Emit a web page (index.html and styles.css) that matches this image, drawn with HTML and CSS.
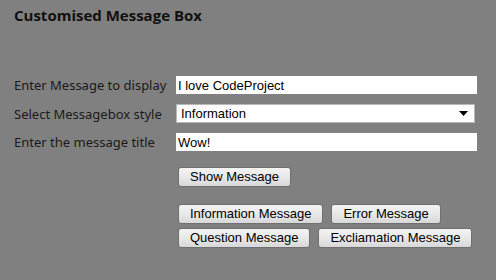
FILE: index.html
```html
<!doctype html>
<html>
<head>
    <meta charset="utf-8">
    <title>Customised Message Box</title>
    <link rel="stylesheet" href="styles.css">
</head>
<body>
<div class="page">
    <h2 class="title">Customised Message Box</h2>
    <form class="form" action="" method="get">
        <label class="lbl" for="msg">Enter Message to display</label>
        <input class="txt" id="msg" type="text" value="I love CodeProject">

        <label class="lbl" for="style">Select Messagebox style</label>
        <div class="sel">
            <span>Information</span>
            <svg width="9" height="5" viewBox="0 0 9 5"><path d="M0 0H9L4.5 5Z" fill="#000"/></svg>
        </div>

        <label class="lbl" for="title">Enter the message title</label>
        <input class="txt" id="title" type="text" value="Wow!">

        <div></div>
        <div class="show"><button class="btn" type="button">Show Message</button></div>

        <div></div>
        <div class="btns">
            <div class="line">
                <button class="btn" type="button">Information Message</button>
                <button class="btn" type="button">Error Message</button>
            </div>
            <div class="line">
                <button class="btn" type="button">Question Message</button>
                <button class="btn" type="button">Excliamation Message</button>
            </div>
        </div>
    </form>
</div>
</body>
</html>
```

FILE: styles.css
```css
html, body {
    margin: 0;
    background: #808080;
}

.page {
    padding: 5px 14px;
}

.title {
    margin: 0;
    font-family: "Open Sans", sans-serif;
    font-weight: bold;
    font-size: 15px;
    color: #111;
}

.form {
    margin-top: 51px;
    display: grid;
    grid-template-columns: 162px 1fr;
    row-gap: 10px;
    align-items: center;
}

.lbl {
    font-family: "Noto Sans", sans-serif;
    font-size: 13px;
    color: #1a1a1a;
}

.txt {
    width: 301px;
    height: 18px;
    box-sizing: border-box;
    margin: 0;
    padding: 0 2px;
    border: none;
    background: #fff;
    font-family: "Liberation Sans", Arial, sans-serif;
    font-size: 13px;
    color: #000;
}

.sel {
    width: 299px;
    height: 19px;
    box-sizing: border-box;
    border: 1px solid #b8b8b8;
    background: #fff;
    display: flex;
    align-items: center;
    justify-content: space-between;
    padding: 0 6px 0 4px;
    font-family: "Liberation Sans", Arial, sans-serif;
    font-size: 13px;
}

.show {
    padding: 6px 0 7px 2px;
}

.btns {
    display: flex;
    flex-direction: column;
    gap: 4px;
    padding-left: 2px;
}

.line {
    display: flex;
    gap: 8px;
}

.btn {
    height: 20px;
    box-sizing: border-box;
    margin: 0;
    padding: 0 11px 1px;
    border: 1px solid #707070;
    border-radius: 3px;
    background: linear-gradient(#f3f3f3, #e8e8e8 50%, #d8d8d8);
    font-family: "Liberation Sans", Arial, sans-serif;
    font-size: 13px;
    color: #000;
    white-space: nowrap;
}
```
